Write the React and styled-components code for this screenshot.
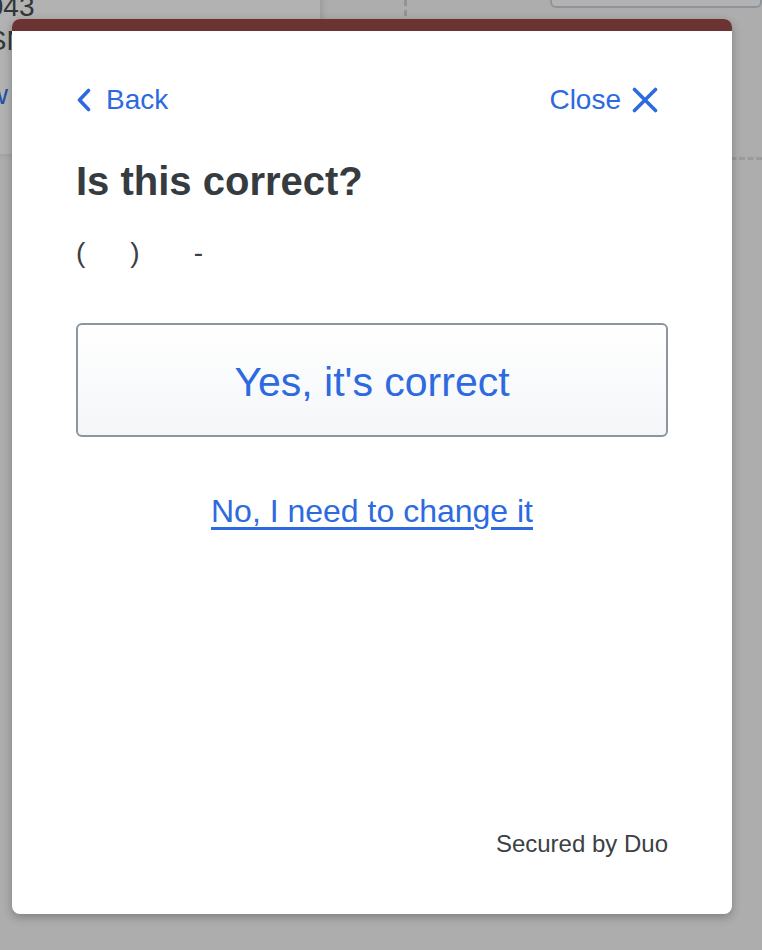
import React from "react";
import styled, { createGlobalStyle } from "styled-components";

const GlobalStyle = createGlobalStyle`
  html, body { margin: 0; padding: 0; }
  body {
    background: #adadad;
    font-family: "Liberation Sans", Arial, Helvetica, sans-serif;
  }
`;

const Stage = styled.div`
  position: relative;
  width: 762px;
  height: 950px;
  overflow: hidden;
  background: #adadad;
`;

const BgPage = styled.div`
  display: flex;
  align-items: flex-start;
`;

const BgCard = styled.div`
  width: 340px;
  height: 162px;
  margin-left: -20px;
  background: #b2b2b2;
  box-shadow: 2px 0 6px rgba(0, 0, 0, 0.12);
  display: flex;
  flex-direction: column;
  font-size: 28px;
  color: #333638;
  line-height: 30px;
  margin-top: -8px;
`;

const BgLine = styled.div`
  color: ${(p) => p.$color || "#333638"};
  margin-top: ${(p) => p.$gap || 0}px;
`;

const BgDash = styled.div`
  width: 0;
  height: 16px;
  margin-left: 84px;
  border-left: 3px dashed #939393;
`;

const BgBox = styled.div`
  margin-left: auto;
  margin-top: -12px;
  width: 208px;
  height: 16px;
  border: 2px solid #8e9499;
  border-radius: 6px;
  background: #b2b2b2;
`;

const BgRule = styled.div`
  position: absolute;
  top: 157px;
  right: 0;
  width: 40px;
  border-top: 3px dashed #9a9a9a;
`;

const Modal = styled.div`
  position: absolute;
  top: 19px;
  left: 12px;
  width: 720px;
  height: 895px;
  background: #fff;
  border-radius: 8px;
  overflow: hidden;
  box-shadow: 0 3px 10px rgba(0, 0, 0, 0.28);
  display: flex;
  flex-direction: column;
`;

const TopBar = styled.div`
  height: 12px;
  background: #6b3432;
  flex: none;
`;

const Body = styled.div`
  flex: 1;
  display: flex;
  flex-direction: column;
  padding: 0 64px 56px;
`;

const NavRow = styled.div`
  margin-top: 53px;
  height: 32px;
  display: flex;
  align-items: center;
  justify-content: space-between;
`;

const NavLink = styled.a`
  display: flex;
  align-items: center;
  gap: ${(p) => p.$gap}px;
  margin-right: ${(p) => p.$end || 0}px;
  font-size: 28px;
  line-height: 32px;
  color: #2d6ae0;
  text-decoration: none;
  cursor: pointer;
`;

const Heading = styled.h1`
  margin: 42px 0 0;
  font-size: 40px;
  line-height: 46px;
  font-weight: 700;
  color: #363b40;
`;

const Phone = styled.div`
  margin-top: 33px;
  font-size: 28px;
  line-height: 32px;
  color: #3b4045;
  display: flex;
`;

const Gap = styled.span`
  display: inline-block;
  width: ${(p) => p.$w}px;
`;

const PrimaryButton = styled.button`
  margin-top: 54px;
  height: 114px;
  width: 100%;
  border: 2px solid #8b96a2;
  border-radius: 6px;
  background: linear-gradient(#ffffff, #f4f6f8);
  color: #2d6ae0;
  font-family: inherit;
  font-size: 41px;
  padding: 4px 0 0;
  cursor: pointer;
`;

const TextLink = styled.a`
  margin-top: 54px;
  align-self: center;
  font-size: 32px;
  line-height: 40px;
  color: #2d6ae0;
  text-decoration: underline;
  text-decoration-thickness: 3px;
  text-underline-offset: 5px;
  cursor: pointer;
`;

const Footer = styled.div`
  margin-top: auto;
  align-self: flex-end;
  font-size: 24px;
  line-height: 28px;
  color: #3b4045;
`;

const Chevron = () => (
  <svg width="16" height="24" viewBox="0 0 16 24" fill="none">
    <path d="M12.5 2.5 L3.5 12 L12.5 21.5" stroke="#2d6ae0" strokeWidth="3.6" strokeLinecap="round" strokeLinejoin="round" />
  </svg>
);

const CloseX = () => (
  <svg width="26" height="26" viewBox="0 0 26 26" fill="none">
    <path d="M2.5 2.5 L23.5 23.5 M23.5 2.5 L2.5 23.5" stroke="#2d6ae0" strokeWidth="3.6" strokeLinecap="round" />
  </svg>
);

export default function App() {
  return (
    <>
      <GlobalStyle />
      <Stage>
        <BgPage>
          <BgCard>
            <BgLine>&nbsp;043</BgLine>
            <BgLine $gap={4}>&nbsp;SN</BgLine>
            <BgLine $gap={24} $color="#2250a8">&nbsp;w</BgLine>
          </BgCard>
          <BgDash />
          <BgBox />
        </BgPage>
        <BgRule />
        <Modal>
          <TopBar />
          <Body>
            <NavRow>
              <NavLink $gap={14}>
                <Chevron />
                Back
              </NavLink>
              <NavLink $gap={11} $end={10}>
                Close
                <CloseX />
              </NavLink>
            </NavRow>
            <Heading>Is this correct?</Heading>
            <Phone>
              <span>(</span>
              <Gap $w={45} />
              <span>)</span>
              <Gap $w={54} />
              <span>-</span>
            </Phone>
            <PrimaryButton>Yes, it's correct</PrimaryButton>
            <TextLink>No, I need to change it</TextLink>
            <Footer>Secured by Duo</Footer>
          </Body>
        </Modal>
      </Stage>
    </>
  );
}
